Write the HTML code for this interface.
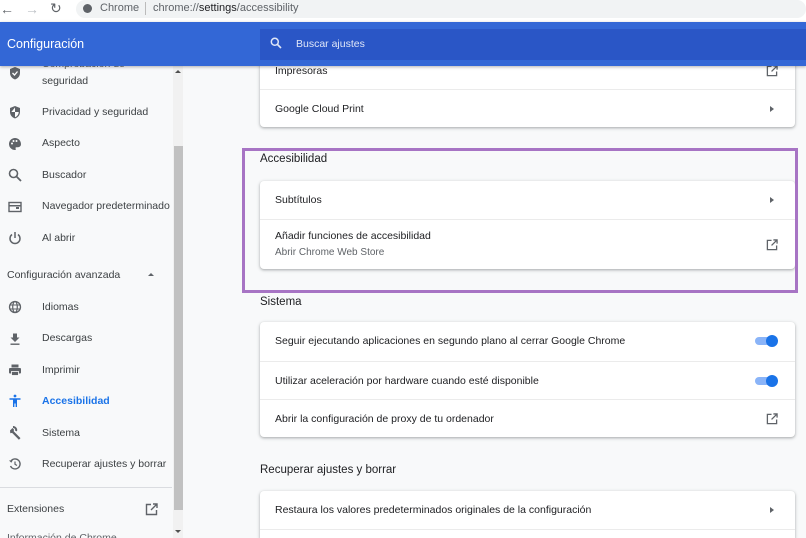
<!DOCTYPE html>
<html style="width:806px;height:538px;overflow:hidden"><head><meta charset="utf-8"><style>
*{margin:0;padding:0;box-sizing:border-box}
body{width:806px;height:538px;overflow:hidden;background:#f8f9fa;font-family:"Liberation Sans",Arial,sans-serif;position:relative;color:#202124}
.a{position:absolute}
.t{font-size:11px;color:#3c4043;white-space:nowrap}
.side{left:42px;font-size:10.5px;color:#3c4043;white-space:nowrap}
.ic{left:8px;width:14px;height:14px}
.card{background:#fff;border-radius:4px;box-shadow:0 1px 2px rgba(60,64,67,.3),0 1px 3px 1px rgba(60,64,67,.12);left:260px;width:535px}
.row{position:absolute;left:0;right:0;border-top:1px solid #ebebeb}
.row span{position:absolute;left:15px;font-size:10.5px;color:#202124}
.arr{position:absolute;right:21px;width:0;height:0;border-left:4px solid #5f6368;border-top:3.5px solid transparent;border-bottom:3.5px solid transparent}
.ext{position:absolute;right:17px;width:12px;height:12px}
.tog{position:absolute;right:16px;width:24px;height:14px}
.h{left:260px;font-size:11.5px;color:#202124}
</style></head><body>
<div class="a" style="left:0;top:0;width:806px;height:22px;background:#fff"></div>
<div class="a" style="left:0;top:1px;font-size:14px;color:#5f6368">←</div>
<div class="a" style="left:25px;top:1px;font-size:14px;color:#bdc1c6">→</div>
<div class="a" style="left:50px;top:0px;font-size:14px;color:#5f6368">↻</div>
<div class="a" style="left:76px;top:0;width:730px;height:18px;background:#f1f3f4;border-radius:9px"></div>
<div class="a" style="left:83px;top:4px;width:9px;height:9px;border-radius:50%;background:#5f6368"></div>
<div class="a t" style="left:100px;top:2px;font-size:11px;color:#5f6368">Chrome</div>
<div class="a" style="left:145px;top:2px;width:1px;height:13px;background:#bbb"></div>
<div class="a t" style="left:153px;top:2px;font-size:11px;color:#5f6368">chrome://<span style="color:#202124">settings</span>/accessibility</div>
<div class="a" style="left:0;top:22px;width:806px;height:44px;background:#3367d6;box-shadow:0 1px 3px rgba(0,0,0,.3);z-index:2"></div>
<div class="a" style="left:7px;top:37px;font-size:12.5px;color:#fff;z-index:3">Configuración</div>
<div class="a" style="left:260px;top:29px;width:546px;height:31px;background:#2a56c6;z-index:3"></div>
<svg class="a" style="left:270px;top:37px;z-index:4" width="12" height="12" viewBox="0 0 12 12"><circle cx="4.8" cy="4.8" r="3.5" fill="none" stroke="#dfe6f7" stroke-width="1.5"/><path d="M7.5 7.5L11 11" stroke="#dfe6f7" stroke-width="1.6"/></svg>
<div class="a" style="left:296px;top:38px;font-size:10.5px;color:#dfe6f7;z-index:4">Buscar ajustes</div>
<div class="a" style="left:173px;top:66px;width:10px;height:472px;background:#f1f1f1"></div>
<div class="a" style="left:174px;top:146px;width:9px;height:364px;background:#c1c1c1"></div>
<div class="a" style="left:175px;top:70px;width:0;height:0;border-left:3px solid transparent;border-right:3px solid transparent;border-bottom:3px solid #505050"></div>
<div class="a" style="left:175px;top:530px;width:0;height:0;border-left:3px solid transparent;border-right:3px solid transparent;border-top:3px solid #505050"></div>
<svg class="a ic" style="top:66px" viewBox="0 0 14 14"><path d="M7 1L2 3v4c0 3 2 5.5 5 6.5 3-1 5-3.5 5-6.5V3z" fill="#5f6368"/><path d="M4.5 7l2 2 3-3.5" stroke="#fff" stroke-width="1.3" fill="none"/></svg>
<div class="a side" style="top:58px;color:#5f6368">Comprobación de</div>
<div class="a side" style="top:75px">seguridad</div>
<svg class="a ic" style="top:105px" viewBox="0 0 14 14"><path d="M7 1L2 3v4c0 3 2 5.5 5 6.5 3-1 5-3.5 5-6.5V3z" fill="#5f6368"/><path d="M7 2.5V7H3.3 M7 7h3.7V7c0 2.5-1.7 4.5-3.7 5.2z" fill="#fff"/></svg>
<div class="a side" style="top:106px">Privacidad y seguridad</div>
<svg class="a ic" style="top:137px" viewBox="0 0 14 14"><path d="M7 1a6 6 0 000 12c1 0 1-1 .6-1.5-.4-.5 0-1.3.8-1.3H10a3 3 0 003-3C13 3.6 10.3 1 7 1z" fill="#5f6368"/><circle cx="4" cy="6.5" r="1" fill="#fff"/><circle cx="5.5" cy="4" r="1" fill="#fff"/><circle cx="8.5" cy="4" r="1" fill="#fff"/></svg>
<div class="a side" style="top:137px">Aspecto</div>
<svg class="a ic" style="top:168px" viewBox="0 0 14 14"><circle cx="5.5" cy="5.5" r="4" fill="none" stroke="#5f6368" stroke-width="1.6"/><path d="M8.5 8.5L13 13" stroke="#5f6368" stroke-width="1.8"/></svg>
<div class="a side" style="top:169px">Buscador</div>
<svg class="a ic" style="top:200px" viewBox="0 0 14 14"><rect x="1" y="2.5" width="12" height="9" fill="none" stroke="#5f6368" stroke-width="1.4"/><rect x="1" y="5" width="12" height="1.5" fill="#5f6368"/><rect x="8" y="7" width="3" height="2" fill="#5f6368"/></svg>
<div class="a side" style="top:200px">Navegador predeterminado</div>
<svg class="a ic" style="top:231px" viewBox="0 0 14 14"><path d="M4 3.5a5 5 0 106 0" fill="none" stroke="#5f6368" stroke-width="1.5"/><path d="M7 1v6" stroke="#5f6368" stroke-width="1.5"/></svg>
<div class="a side" style="top:232px">Al abrir</div>
<div class="a side" style="left:7px;top:269px">Configuración avanzada</div>
<div class="a" style="left:148px;top:273px;width:0;height:0;border-left:3px solid transparent;border-right:3px solid transparent;border-bottom:3px solid #5f6368"></div>
<svg class="a ic" style="top:300px" viewBox="0 0 14 14"><circle cx="7" cy="7" r="5.5" fill="none" stroke="#5f6368" stroke-width="1.3"/><ellipse cx="7" cy="7" rx="2.3" ry="5.5" fill="none" stroke="#5f6368" stroke-width="1.2"/><path d="M1.5 5h11M1.5 9h11" stroke="#5f6368" stroke-width="1.1"/></svg>
<div class="a side" style="top:301px">Idiomas</div>
<svg class="a ic" style="top:332px" viewBox="0 0 14 14"><path d="M5 1.5h4v4h2.5L7 10 2.5 5.5H5z" fill="#5f6368"/><rect x="2.5" y="11.5" width="9" height="1.4" fill="#5f6368"/></svg>
<div class="a side" style="top:332px">Descargas</div>
<svg class="a ic" style="top:363px" viewBox="0 0 14 14"><rect x="3.5" y="1.5" width="7" height="3" fill="#5f6368"/><rect x="1" y="5" width="12" height="5.5" rx="1" fill="#5f6368"/><rect x="3.5" y="8.5" width="7" height="4" fill="#5f6368" stroke="#fff" stroke-width=".8"/></svg>
<div class="a side" style="top:364px">Imprimir</div>
<svg class="a ic" style="top:394px" viewBox="0 0 14 14"><circle cx="7" cy="2" r="1.4" fill="#1a73e8"/><path d="M1.5 4.3h11v1.4H9V13H7.6V9.5H6.4V13H5V5.7H1.5z" fill="#1a73e8"/></svg>
<div class="a side" style="top:395px;color:#1a73e8;font-weight:bold;font-size:10.5px">Accesibilidad</div>
<svg class="a ic" style="top:426px" viewBox="0 0 14 14"><path d="M2 4.5L4.5 2l1.5 1.5-.3 1.8 6.8 6.8-1.6 1.6-6.8-6.8-1.8.3z" fill="#5f6368"/><path d="M5 1a3 3 0 013 4" stroke="#5f6368" stroke-width="2" fill="none"/></svg>
<div class="a side" style="top:427px">Sistema</div>
<svg class="a ic" style="top:457px" viewBox="0 0 14 14"><path d="M3 4a5 5 0 11-.5 5" fill="none" stroke="#5f6368" stroke-width="1.4"/><path d="M1 3.5l2.3 2.3 1.5-2.5z" fill="#5f6368"/><path d="M7 4.5V7.3l2 1.2" stroke="#5f6368" stroke-width="1.2" fill="none"/></svg>
<div class="a side" style="top:458px">Recuperar ajustes y borrar</div>
<div class="a" style="left:0;top:487px;width:172px;height:1px;background:#dadce0"></div>
<div class="a side" style="left:7px;top:503px">Extensiones</div>
<svg class="a" style="left:145px;top:503px" width="13" height="13" viewBox="0 0 13 13"><path d="M6 1.5H1.5v10h10V7" fill="none" stroke="#5f6368" stroke-width="1.4"/><path d="M8 1h4v4M12 1L6 7" fill="none" stroke="#5f6368" stroke-width="1.4"/></svg>
<div class="a side" style="left:7px;top:532px;color:#5f6368">Información de Chrome</div>
<div class="a card" style="top:40px;height:87px">
  <div class="row" style="top:14px;height:35px;border-top:none"><span style="top:11px">Impresoras</span><svg class="ext" style="top:11px" viewBox="0 0 13 13"><path d="M6 1.5H1.5v10h10V7" fill="none" stroke="#5f6368" stroke-width="1.4"/><path d="M8 1h4v4M12 1L6 7" fill="none" stroke="#5f6368" stroke-width="1.4"/></svg></div>
  <div class="row" style="top:49px;height:38px"><span style="top:13px">Google Cloud Print</span><i class="arr" style="top:16px"></i></div>
</div>
<div class="a h" style="top:153px">Accesibilidad</div>
<div class="a card" style="top:181px;height:88px">
  <div class="row" style="top:0;height:38px;border-top:none"><span style="top:13px">Subtítulos</span><i class="arr" style="top:16px"></i></div>
  <div class="row" style="top:38px;height:50px"><span style="top:10px">Añadir funciones de accesibilidad</span><span style="top:27px;color:#5f6368;font-size:10px">Abrir Chrome Web Store</span><svg class="ext" style="top:19px" viewBox="0 0 13 13"><path d="M6 1.5H1.5v10h10V7" fill="none" stroke="#5f6368" stroke-width="1.4"/><path d="M8 1h4v4M12 1L6 7" fill="none" stroke="#5f6368" stroke-width="1.4"/></svg></div>
</div>
<div class="a" style="left:242px;top:148px;width:556px;height:145px;border:3px solid #a774c4"></div>
<div class="a h" style="top:296px">Sistema</div>
<div class="a card" style="top:322px;height:115px">
  <div class="row" style="top:0;height:39px;border-top:none"><span style="top:13px">Seguir ejecutando aplicaciones en segundo plano al cerrar Google Chrome</span><svg class="tog" style="top:12px" viewBox="0 0 24 14"><rect x="0" y="3" width="20" height="8" rx="4" fill="#8ab4f8"/><circle cx="17" cy="7" r="6" fill="#1a73e8"/></svg></div>
  <div class="row" style="top:39px;height:38px"><span style="top:13px">Utilizar aceleración por hardware cuando esté disponible</span><svg class="tog" style="top:12px" viewBox="0 0 24 14"><rect x="0" y="3" width="20" height="8" rx="4" fill="#8ab4f8"/><circle cx="17" cy="7" r="6" fill="#1a73e8"/></svg></div>
  <div class="row" style="top:77px;height:38px"><span style="top:13px">Abrir la configuración de proxy de tu ordenador</span><svg class="ext" style="top:13px" viewBox="0 0 13 13"><path d="M6 1.5H1.5v10h10V7" fill="none" stroke="#5f6368" stroke-width="1.4"/><path d="M8 1h4v4M12 1L6 7" fill="none" stroke="#5f6368" stroke-width="1.4"/></svg></div>
</div>
<div class="a h" style="top:464px">Recuperar ajustes y borrar</div>
<div class="a card" style="top:491px;height:47px;border-radius:4px 4px 0 0">
  <div class="row" style="top:0;height:38px;border-top:none"><span style="top:13px">Restaura los valores predeterminados originales de la configuración</span><i class="arr" style="top:16px"></i></div>
  <div class="row" style="top:38px;height:9px"></div>
</div>
</body></html>
